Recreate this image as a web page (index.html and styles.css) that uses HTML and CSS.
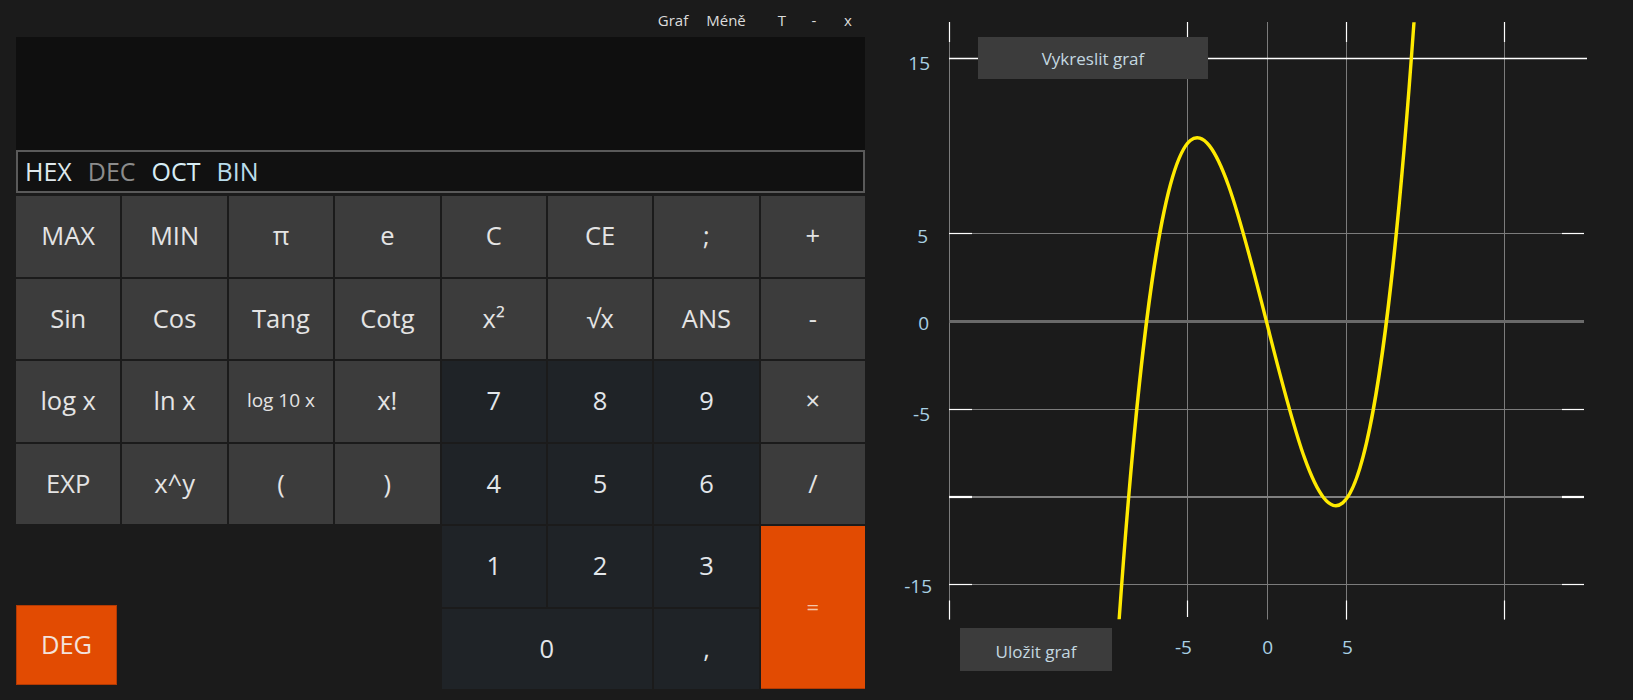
FILE: index.html
```html
<!DOCTYPE html>
<html lang="cs">
<head>
<meta charset="utf-8">
<title>Kalkulačka</title>
<link rel="stylesheet" href="styles.css">
</head>
<body>
<div class="app">
  <div class="calc">
    <div class="titlebar">
      <span class="tb tb-graf">Graf</span>
      <span class="tb tb-mene">Méně</span>
      <span class="tb tb-t">T</span>
      <span class="tb tb-min">-</span>
      <span class="tb tb-x">x</span>
    </div>
    <div class="display"></div>
    <div class="modes">
      <span class="mode hex">HEX</span>
      <span class="mode dec">DEC</span>
      <span class="mode oct">OCT</span>
      <span class="mode bin">BIN</span>
    </div>
    <div class="keys">
      <div class="key">MAX</div>
      <div class="key">MIN</div>
      <div class="key">π</div>
      <div class="key">e</div>
      <div class="key">C</div>
      <div class="key">CE</div>
      <div class="key">;</div>
      <div class="key">+</div>

      <div class="key">Sin</div>
      <div class="key">Cos</div>
      <div class="key">Tang</div>
      <div class="key">Cotg</div>
      <div class="key">x²</div>
      <div class="key">√x</div>
      <div class="key">ANS</div>
      <div class="key">-</div>

      <div class="key">log x</div>
      <div class="key">ln x</div>
      <div class="key key-small">log 10 x</div>
      <div class="key">x!</div>
      <div class="key num">7</div>
      <div class="key num">8</div>
      <div class="key num">9</div>
      <div class="key">×</div>

      <div class="key">EXP</div>
      <div class="key">x^y</div>
      <div class="key">(</div>
      <div class="key">)</div>
      <div class="key num">4</div>
      <div class="key num">5</div>
      <div class="key num">6</div>
      <div class="key">/</div>

      <div class="key deg">DEG</div>
      <div class="key num k1">1</div>
      <div class="key num k2">2</div>
      <div class="key num k3">3</div>
      <div class="key eq">=</div>
      <div class="key num k0">0</div>
      <div class="key num kcomma">,</div>
    </div>
  </div>

  <div class="graph">
    <svg class="plot" width="763" height="700" viewBox="870 0 763 700" xmlns="http://www.w3.org/2000/svg">
      <defs>
        <clipPath id="plotclip">
          <rect x="940" y="22.3" width="660" height="597"/>
        </clipPath>
      </defs>
      <g class="grid-v">
        <line x1="949.5" y1="22" x2="949.5" y2="619.5"/>
        <line x1="1187.5" y1="22" x2="1187.5" y2="617"/>
        <line x1="1267.5" y1="22" x2="1267.5" y2="619.5"/>
        <line x1="1346.5" y1="22" x2="1346.5" y2="619.5"/>
        <line x1="1504.5" y1="22" x2="1504.5" y2="619.5"/>
      </g>
      <g class="tick-v">
        <line x1="949.5" y1="22" x2="949.5" y2="42"/>
        <line x1="1187.5" y1="22" x2="1187.5" y2="42"/>
        <line x1="1346.5" y1="22" x2="1346.5" y2="42"/>
        <line x1="1504.5" y1="22" x2="1504.5" y2="42"/>
        <line x1="949.5" y1="600.5" x2="949.5" y2="619.5"/>
        <line x1="1187.5" y1="600.5" x2="1187.5" y2="617"/>
        <line x1="1346.5" y1="600.5" x2="1346.5" y2="619.5"/>
        <line x1="1504.5" y1="600.5" x2="1504.5" y2="619.5"/>
      </g>
      <g class="grid-h">
        <line x1="949" y1="233.5" x2="1584" y2="233.5"/>
        <line x1="949" y1="409.5" x2="1584" y2="409.5"/>
        <line x1="949" y1="584.5" x2="1584" y2="584.5"/>
      </g>
      <line class="grid-h-thick" x1="949" y1="321.5" x2="1584" y2="321.5"/>
      <line class="grid-h-mid" x1="949" y1="497" x2="1584" y2="497"/>
      <line class="line-top" x1="949" y1="58.5" x2="1587" y2="58.5"/>
      <g class="tick-h">
        <line x1="949" y1="233.5" x2="972" y2="233.5"/>
        <line x1="1562" y1="233.5" x2="1584" y2="233.5"/>
        <line x1="949" y1="409.5" x2="972" y2="409.5"/>
        <line x1="1562" y1="409.5" x2="1584" y2="409.5"/>
        <line x1="949" y1="584.5" x2="972" y2="584.5"/>
        <line x1="1562" y1="584.5" x2="1584" y2="584.5"/>
      </g>
      <g class="tick-h-thick">
        <line x1="949" y1="497" x2="972" y2="497"/>
        <line x1="1562" y1="497" x2="1584" y2="497"/>
      </g>
      <path class="curve" clip-path="url(#plotclip)" d="M1114.04,694.1 C1215.68,-860.3 1317.32,1503.7 1418.96,-50.7"/>
      <g class="axis-label ylab">
        <text x="930" y="70">15</text>
        <text x="928" y="243">5</text>
        <text x="929" y="329.5">0</text>
        <text x="930" y="421">-5</text>
        <text x="932" y="593">-15</text>
      </g>
      <g class="axis-label xlab">
        <text x="1183.5" y="654">-5</text>
        <text x="1267.7" y="654">0</text>
        <text x="1347.5" y="654">5</text>
      </g>
    </svg>
    <div class="gbtn draw-btn">Vykreslit graf</div>
    <div class="gbtn save-btn">Uložit graf</div>
  </div>
</div>
</body>
</html>
```

FILE: styles.css
```css
* {
  box-sizing: border-box;
}

html, body {
  margin: 0;
  padding: 0;
  background: #1b1b1b;
  overflow: hidden;
}

body {
  width: 1633px;
  height: 700px;
  font-family: "Open Sans", "Noto Sans", sans-serif;
  color: #e6e6e6;
}

.app {
  display: flex;
  height: 700px;
}

/* ---------- calculator ---------- */
.calc {
  width: 870px;
  padding-left: 16px;
  padding-right: 5px;
  display: flex;
  flex-direction: column;
}

.titlebar {
  height: 37px;
  display: flex;
  justify-content: flex-end;
  align-items: center;
  padding-right: 3px;
  padding-top: 2px;
  font-size: 15px;
  color: #dcdcdc;
}

.tb {
  display: inline-flex;
  justify-content: center;
}

.tb-graf { width: 40px; }
.tb-mene { width: 50px; margin-left: 8px; }
.tb-t { width: 28px; margin-left: 17px; }
.tb-min { width: 28px; margin-left: 4px; }
.tb-x { width: 28px; margin-left: 6px; }

.display {
  height: 113px;
  background: #0f0f0f;
}

.modes {
  height: 43px;
  border: 2px solid #5a5a5a;
  background: #111111;
  display: flex;
  align-items: center;
  padding-left: 7px;
  font-size: 25px;
}

.mode {
  margin-right: 16px;
  line-height: 1;
}

.hex { color: #dfe8ec; }
.dec { color: #8c8c8c; }
.oct { color: #d6ecf4; }
.bin { color: #b9dcea; }

.keys {
  margin-top: 3px;
  display: grid;
  grid-template-columns: repeat(8, 1fr);
  grid-template-rows: repeat(6, 80.5px);
  gap: 2px;
}

.key {
  background: #3c3c3c;
  display: flex;
  align-items: center;
  justify-content: center;
  font-size: 25.5px;
  color: #e4e4e4;
  padding-bottom: 2px;
}

.key-small {
  font-size: 19px;
}

.num {
  background: #1f2327;
  color: #e2e6ea;
}

.deg {
  grid-column: 1;
  grid-row: 5 / 7;
  align-self: end;
  width: 101px;
  height: 80px;
  margin-bottom: 4px;
  background: #e24b02;
  border: 1px solid #b23a04;
  color: #f3e2dc;
}

.k1 { grid-column: 5; grid-row: 5; }
.k2 { grid-column: 6; grid-row: 5; }
.k3 { grid-column: 7; grid-row: 5; }
.k0 { grid-column: 5 / 7; grid-row: 6; }
.kcomma { grid-column: 7; grid-row: 6; }

.eq {
  grid-column: 8;
  grid-row: 5 / 7;
  background: #e24b02;
  color: #f4c6aa;
  font-size: 22px;
  border-bottom: 1px solid #b23a04;
}

/* ---------- graph ---------- */
.graph {
  position: relative;
  width: 763px;
  height: 700px;
}

.plot {
  display: block;
}

.grid-v line,
.grid-h line {
  stroke: #7c7c7c;
  stroke-width: 1;
}

.grid-h-thick {
  stroke: #6a6a6a;
  stroke-width: 3;
}

.grid-h-mid {
  stroke: #808080;
  stroke-width: 2;
}

.line-top {
  stroke: #ffffff;
  stroke-width: 1.5;
}

.tick-v line,
.tick-h line {
  stroke: #ffffff;
  stroke-width: 1.2;
}

.tick-h-thick line {
  stroke: #ffffff;
  stroke-width: 2.2;
}

.curve {
  fill: none;
  stroke: #ffea00;
  stroke-width: 3.4;
  stroke-linecap: round;
}

.axis-label {
  font-family: "Open Sans", "Noto Sans", sans-serif;
  font-size: 19px;
  fill: #a9d0e4;
}

.ylab text {
  text-anchor: end;
}

.xlab text {
  text-anchor: middle;
}

.gbtn {
  position: absolute;
  background: #3c3c3c;
  color: #c4d8e0;
  font-size: 17px;
  display: flex;
  align-items: center;
  justify-content: center;
}

.draw-btn {
  left: 108px;
  top: 37px;
  width: 230px;
  height: 42px;
}

.save-btn {
  left: 90px;
  top: 628px;
  width: 152px;
  height: 43px;
  padding-top: 4px;
}
```
